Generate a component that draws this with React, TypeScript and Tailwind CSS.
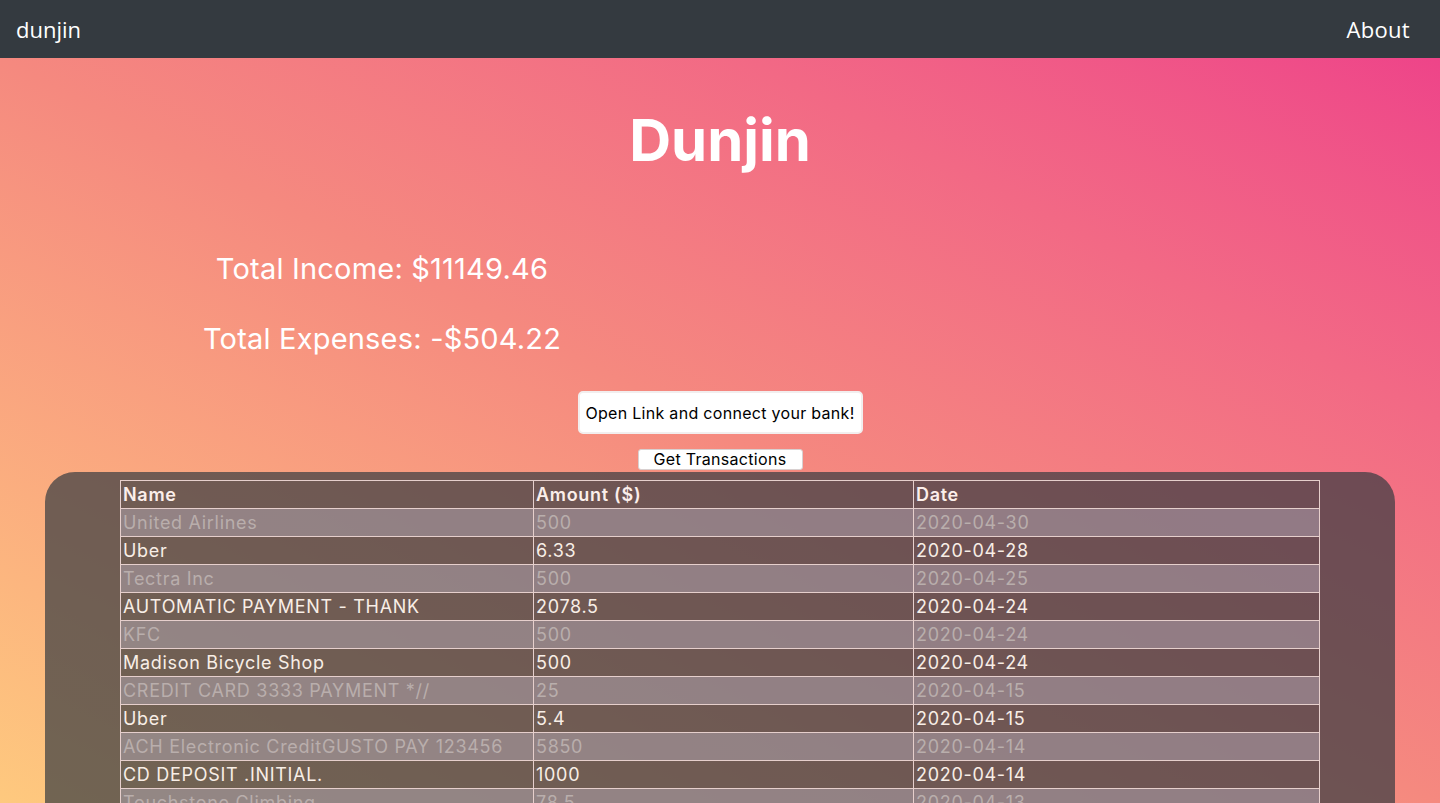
import React from 'react';

interface Txn {
  name: string;
  amount: string;
  date: string;
}

const transactions: Txn[] = [
  { name: 'United Airlines', amount: '500', date: '2020-04-30' },
  { name: 'Uber', amount: '6.33', date: '2020-04-28' },
  { name: 'Tectra Inc', amount: '500', date: '2020-04-25' },
  { name: 'AUTOMATIC PAYMENT - THANK', amount: '2078.5', date: '2020-04-24' },
  { name: 'KFC', amount: '500', date: '2020-04-24' },
  { name: 'Madison Bicycle Shop', amount: '500', date: '2020-04-24' },
  { name: 'CREDIT CARD 3333 PAYMENT *//', amount: '25', date: '2020-04-15' },
  { name: 'Uber', amount: '5.4', date: '2020-04-15' },
  { name: 'ACH Electronic CreditGUSTO PAY 123456', amount: '5850', date: '2020-04-14' },
  { name: 'CD DEPOSIT .INITIAL.', amount: '1000', date: '2020-04-14' },
  { name: 'Touchstone Climbing', amount: '78.5', date: '2020-04-13' },
  { name: 'United Airlines', amount: '-500', date: '2020-04-13' },
  { name: "McDonald's", amount: '12', date: '2020-04-12' },
  { name: 'Starbucks', amount: '4.33', date: '2020-04-12' },
  { name: 'SparkFun', amount: '89.4', date: '2020-04-11' },
];

function Navbar() {
  return (
    <nav className="h-[58px] bg-[#343a40] flex items-center justify-between pl-4 pr-[30px] font-['Open_Sans',sans-serif] text-white">
      <span className="text-[22px]">dunjin</span>
      <span className="text-[22px] tracking-[0.3px]">About</span>
    </nav>
  );
}

function TransactionTable() {
  return (
    <table className="w-[1200px] mx-auto border-collapse text-[18px] leading-[27px] tracking-[0.7px]">
      <thead>
        <tr className="text-[#fbeeea]">
          <th className="w-[413px] border border-[#e6cfcc] px-[2px] text-left font-semibold">Name</th>
          <th className="w-[380px] border border-[#e6cfcc] px-[2px] text-left font-semibold">Amount ($)</th>
          <th className="border border-[#e6cfcc] px-[2px] text-left font-semibold">Date</th>
        </tr>
      </thead>
      <tbody>
        {transactions.map((t, idx) => (
          <tr
            key={idx}
            className={idx % 2 === 0 ? 'bg-[#c8bfd0]/40 text-[#b9aeac]' : 'text-[#f8eee6]'}
          >
            <td className="border border-[#e6cfcc] px-[2px]">{t.name}</td>
            <td className="border border-[#e6cfcc] px-[2px]">{t.amount}</td>
            <td className="border border-[#e6cfcc] px-[2px]">{t.date}</td>
          </tr>
        ))}
      </tbody>
    </table>
  );
}

export default function App() {
  return (
    <div className="h-screen flex flex-col font-['Inter',sans-serif]">
      <Navbar />
      <main className="flex-1 overflow-hidden bg-linear-to-tr from-[#fec97e] via-[#f5897f] to-[#ee4489] text-white">
        <h1 className="pt-[44px] text-center text-[58px] font-bold leading-[76px]">Dunjin</h1>

        <div className="w-[764px] mt-[74px] text-center text-[29px] leading-[34px] tracking-[0.2px]">
          <p>Total Income: $11149.46</p>
          <p className="mt-[36px]">Total Expenses: -$504.22</p>
        </div>

        <div className="mt-[35px] flex flex-col items-center">
          <button className="h-[43px] w-[285px] bg-white text-black text-[16px] tracking-[0.3px] rounded-[5px] border-2 border-[#f2eeee]">
            Open Link and connect your bank!
          </button>
          <button className="mt-[15px] h-[21px] w-[165px] bg-white text-black text-[16px] tracking-[0.3px] leading-[19px] rounded-[3px] border border-[#d8d0d0]">
            Get Transactions
          </button>
        </div>

        <section className="mt-[2px] mx-[45px] rounded-t-[30px] bg-[#343a40]/70 pt-[8px] pb-8">
          <TransactionTable />
        </section>
      </main>
    </div>
  );
}
